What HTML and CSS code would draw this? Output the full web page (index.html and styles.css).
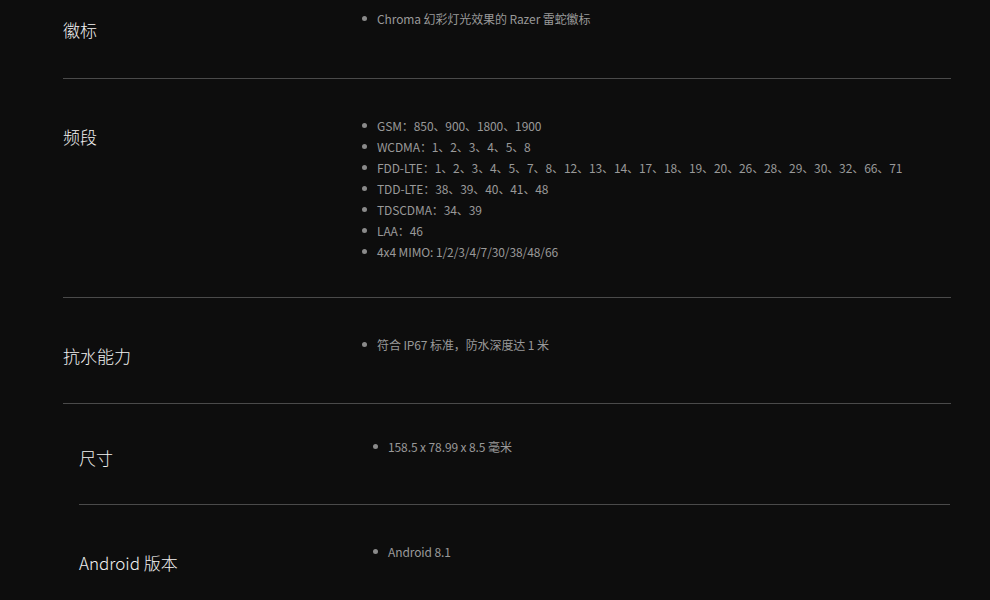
FILE: index.html
```html
<!DOCTYPE html>
<html lang="zh-CN">
<head>
    <meta charset="UTF-8">
    <meta name="viewport" content="width=device-width, initial-scale=1.0">
    <title>规格</title>
    <link rel="stylesheet" href="styles.css">
</head>
<body>
    <div class="specs">
        <div class="spec-row first">
            <div class="spec-label">徽标</div>
            <ul class="spec-value">
                <li>Chroma 幻彩灯光效果的 Razer 雷蛇徽标</li>
            </ul>
        </div>
        <div class="spec-row">
            <div class="spec-label">频段</div>
            <ul class="spec-value">
                <li>GSM：850、900、1800、1900</li>
                <li>WCDMA：1、2、3、4、5、8</li>
                <li>FDD-LTE：1、2、3、4、5、7、8、12、13、14、17、18、19、20、26、28、29、30、32、66、71</li>
                <li>TDD-LTE：38、39、40、41、48</li>
                <li>TDSCDMA：34、39</li>
                <li>LAA：46</li>
                <li>4x4 MIMO: 1/2/3/4/7/30/38/48/66</li>
            </ul>
        </div>
        <div class="spec-row">
            <div class="spec-label">抗水能力</div>
            <ul class="spec-value">
                <li>符合 IP67 标准，防水深度达 1 米</li>
            </ul>
        </div>
        <div class="spec-row sub tight">
            <div class="spec-label">尺寸</div>
            <ul class="spec-value">
                <li>158.5 x 78.99 x 8.5 毫米</li>
            </ul>
        </div>
        <div class="spec-row sub">
            <div class="spec-label">Android 版本</div>
            <ul class="spec-value">
                <li>Android 8.1</li>
            </ul>
        </div>
    </div>
</body>
</html>
```

FILE: styles.css
```css
body {
    margin: 0;
    background-color: #0d0d0d;
    font-family: "Noto Sans CJK SC", "Noto Sans", sans-serif;
}
.specs {
    padding: 0 39px 0 63px;
}
.spec-row {
    display: flex;
    align-items: flex-start;
    padding: 36px 0 35px;
    border-bottom: 1px solid #4a4a4a;
}
.spec-row.first {
    padding-top: 8px;
    padding-bottom: 36px;
}
.spec-row.sub {
    margin: 0 1px 0 16px;
}
.spec-row.tight {
    padding-top: 32px;
    padding-bottom: 34px;
}
.spec-label {
    width: 297px;
    flex-shrink: 0;
    margin-top: 10px;
    font-size: 17px;
    font-weight: 300;
    line-height: 24px;
    color: #f2f2f2;
}
.spec-row.sub .spec-label {
    width: 292px;
}
.spec-value {
    list-style: none;
    margin: 0;
    padding: 0;
    font-size: 12px;
    line-height: 21px;
    letter-spacing: -0.1px;
    color: #999;
}
.spec-value li {
    position: relative;
    padding-left: 17px;
    white-space: nowrap;
}
.spec-value li::before {
    content: "";
    position: absolute;
    left: 2px;
    top: 8px;
    width: 5px;
    height: 5px;
    border-radius: 50%;
    background-color: #8a8a8a;
}
```
